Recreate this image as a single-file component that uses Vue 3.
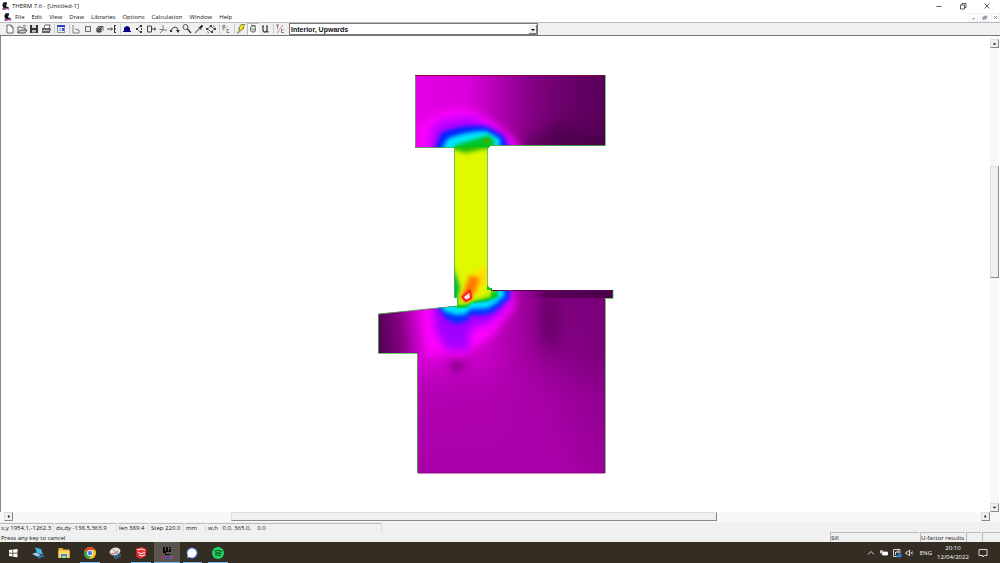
<script setup>
const menus = ['File', 'Edit', 'View', 'Draw', 'Libraries', 'Options', 'Calculation', 'Window', 'Help']

const line = (d, s = '#333', w = 1) => ({ d, s, w, f: 'none' })
const fill = (d, f = '#333') => ({ d, f, s: 'none', w: 0 })

const groups = [
  [
    { name: 'New', p: [{ d: 'M3 2h4l2 2v6H3z', f: '#fff', s: '#444', w: 0.8 }, line('M7 2v2h2', '#444', 0.6)] },
    { name: 'Open', p: [{ d: 'M2 10V4h3l1 1h3v2', f: '#fff', s: '#333', w: 0.8 }, { d: 'M2 10l2-3h7l-2 3z', f: '#ccc', s: '#333', w: 0.8 }, line('M7 3q2-2 3 1', '#333', 0.7)] },
    { name: 'Save', p: [fill('M2 2h8v8H2z', '#333'), fill('M4 2h4v3H4z', '#ddd'), fill('M4 7h4v2.4H4z', '#bbb')] },
    { name: 'Print', p: [{ d: 'M4 5l1-3h5L9 5', f: '#fff', s: '#444', w: 0.8 }, fill('M2 5h9l-1 5H2z', '#666'), fill('M3 7h6v1H3z', '#ccc')] },
  ],
  [{ name: 'Properties', p: [{ d: 'M2.5 2.5h7v7h-7z', f: '#eef', s: '#678', w: 0.8 }, fill('M2 2h8v2H2z', '#3344bb'), line('M4 5.5h2M4 7.5h2', '#777', 0.8), fill('M7 5h2v3H7z', '#3555d0')] }],
  [
    { name: 'Polygon', p: [line('M3 2v8h6V7L5 6', '#666', 0.8)] },
    { name: 'Rectangle', p: [line('M3.5 3.5h5v5h-5z', '#555', 0.9)] },
    { name: 'Fill void', p: [{ d: 'M3 5h4v4H3z', f: '#777', s: '#333', w: 1 }, line('M4 3.5h5v4M3 9l6-6', '#333', 0.8)] },
    { name: 'Insert point', p: [line('M1 6h5M5 4.5L6.5 6 5 7.5', '#333', 0.9), line('M8.5 2v8', '#333', 1), line('M8 2.5h2M8 6h2M8 9.5h2', '#333', 1)] },
  ],
  [
    { name: 'Frame', p: [fill('M3 8V5q1-2 4-2l2 2v3h1v1H2V8z', '#000080')] },
    { name: 'Edit points', p: [line('M8 2v2M8 8v2M4 6l3-3M4 6l3 3', '#555', 0.7), fill('M3 5h2v2H3zM7 2h2v2H7zM7 8h2v2H7zM8 5h1v2H8z')] },
    { name: 'Move', p: [line('M2.5 3h4v6h-4zM7 6h4M9 4.5L10.7 6 9 7.5', '#333', 0.9)] },
    { name: 'Origin', p: [line('M6 2v5M6 7h4M6 7L3 10M2.500 6.500h3', '#555', 0.8)] },
    { name: 'Rotate', p: [line('M2 8q1-4 4-4t3 4', '#333', 0.9), fill('M7 7h4L9 10z'), fill('M1 7h2v2H1z')] },
    { name: 'Zoom', p: [{ d: 'M2 4a2.2 2.2 0 1 0 5 0a2.2 2.2 0 1 0-5 0', f: '#eee', s: '#444', w: 0.9 }, line('M6.5 6l3.5 4', '#333', 1.3)] },
    { name: 'Pick material', p: [line('M2 10l5-5', '#777', 1.1), line('M5.5 4l3 3', '#333', 1), line('M7 5l2.500-2.500', '#222', 2)] },
    { name: 'Tape measure', p: [line('M2.500 6l3-3 4 3-3 3z', '#444', 0.8), fill('M5 2h2v2H5zM9 5h2v2H9zM1 5h2v2H1zM6 8h2v2H6z', '#444'), line('M8 2.500l2 1.500M2 8.500l2 1.500', '#555', 0.7)] },
  ],
  [{ name: 'Boundary conditions', p: [line('M3 2v5M3 2.5h2v2H3M9 6.5H7v3h2.500', '#777', 0.9), line('M3 8l5-5', '#aaa', 0.5)] }],
  [
    { name: 'Calculate', p: [{ d: 'M6 1.500h4L7.500 5H9l-6.500 5.500L5 6H3.500z', f: '#ffe800', s: '#444', w: 0.6 }] },
    { name: 'Show results', on: true, p: [line('M3.500 4q3-3 5 0v4q-2 3-5 0zM4 6h4M5 3h3M5 8h3M4 2l5 1', '#666', 0.9)] },
    { name: 'U-factors', p: [line('M4 3v4q0 2 2 2t2-2V3', '#444', 1.3), fill('M3 2.500h2v1H3zM7 2.500h2v1H7zM8 8h1.500v1.500H8z', '#444')] },
  ],
  [{ name: 'Temperature', p: [line('M2 2h3M3.500 2v4M9.500 6.500H7.500v3h2.500', '#666', 0.8), line('M3 10l6-8', '#d06060', 0.7)] }],
]

const readings = ['x,y 1954.1,-1262.3', 'dx,dy -138.5,363.9', 'len 389.4', 'Step 220.0', 'mm', 'w,h\u00a0\u00a0 0.0, 365.0,\u00a0\u00a0\u00a0 0.0']
</script>

<template>
  <div class="window">
    <header class="titlebar">
      <svg class="logo" viewBox="0 0 12 12"><path d="M3 1h5v3H7v3h3v2H3V7H2V3h1z" fill="#15151c" /><path d="M2 9h3v2H2zM7 8h2v2H7z" fill="#702070" /><path d="M5 9h2v2H5z" fill="#bb3344" /><path d="M9 9h2v2H9z" fill="#7744dd" /></svg>
      <span>THERM 7.6 - [Untitled-1]</span>
      <div class="winctl">
        <button aria-label="Minimize"><svg viewBox="0 0 10 10"><path d="M2.500 5.500h5" /></svg></button>
        <button aria-label="Restore"><svg viewBox="0 0 10 10"><path d="M2.500 4h4v4h-4zM4 4V2.500h4v4H6.500" /></svg></button>
        <button aria-label="Close"><svg viewBox="0 0 10 10"><path d="M2.500 2.500l5 5M7.500 2.500l-5 5" /></svg></button>
      </div>
    </header>

    <nav class="menubar">
      <svg class="logo" viewBox="0 0 12 12"><path d="M3 1h5v3H7v3h3v2H3V7H2V3h1z" fill="#15151c" /><path d="M2 9h3v2H2zM7 8h2v2H7z" fill="#702070" /><path d="M5 9h2v2H5z" fill="#bb3344" /><path d="M9 9h2v2H9z" fill="#7744dd" /></svg>
      <button v-for="m in menus" :key="m">{{ m }}</button>
      <div class="docctl">
        <button aria-label="Minimize document"><svg viewBox="0 0 8 8"><path d="M2.500 5.500h3" /></svg></button>
        <button aria-label="Restore document"><svg viewBox="0 0 8 8"><path d="M2 4h3v2H2zM3.500 4V2.500h3v2H5" /></svg></button>
        <button aria-label="Close document"><svg viewBox="0 0 8 8"><path d="M2.500 2.500l3 3M5.500 2.500l-3 3" /></svg></button>
      </div>
    </nav>

    <div class="toolbar">
      <div v-for="(g, i) in groups" :key="i" class="group">
        <button v-for="t in g" :key="t.name" :class="{ on: t.on }" :aria-label="t.name">
          <svg viewBox="0 0 12 12"><path v-for="(q, k) in t.p" :key="k" :d="q.d" :fill="q.f" :stroke="q.s" :stroke-width="q.w" /></svg>
        </button>
      </div>
      <div class="combo">
        <select aria-label="Boundary condition"><option>Interior, Upwards</option></select>
        <svg class="drop" viewBox="0 0 8 9"><path d="M0 0h8v9H0z" fill="#f0f0f0" /><path d="M0 8.500h7.500V0" fill="none" stroke="#777" /><path d="M2 4h4L4 6z" /></svg>
      </div>
    </div>

    <main class="workspace">
      <svg class="drawing" viewBox="1 36 989 476" role="img" aria-label="Thermal model">
        <defs>
          <linearGradient id="head" gradientUnits="userSpaceOnUse" x1="415" x2="605" y1="100" y2="104">
            <stop offset="0" stop-color="#e600e6" /><stop offset=".28" stop-color="#d800d8" /><stop offset=".44" stop-color="#b000b0" /><stop offset=".62" stop-color="#820082" /><stop offset=".8" stop-color="#690069" /><stop offset="1" stop-color="#580058" />
          </linearGradient>
          <linearGradient id="base" gradientUnits="userSpaceOnUse" x1="417" x2="605" y1="350" y2="330">
            <stop offset="0" stop-color="#d400d4" /><stop offset=".35" stop-color="#c800c8" /><stop offset=".6" stop-color="#9c009c" /><stop offset="1" stop-color="#7c007c" />
          </linearGradient>
          <linearGradient id="lower" x1="0" x2="0" y1="0" y2="1">
            <stop offset="0" stop-color="#aa00aa" stop-opacity="0" /><stop offset=".35" stop-color="#aa00aa" stop-opacity=".8" /><stop offset="1" stop-color="#a800a8" />
          </linearGradient>
          <linearGradient id="shade" gradientUnits="userSpaceOnUse" x1="540" x2="622" y1="400" y2="370">
            <stop offset="0" stop-color="#780078" stop-opacity="0" /><stop offset="1" stop-color="#780078" stop-opacity=".6" />
          </linearGradient>
          <linearGradient id="nose" gradientUnits="userSpaceOnUse" x1="378" x2="432" y1="340" y2="334">
            <stop offset="0" stop-color="#500050" /><stop offset=".45" stop-color="#880088" /><stop offset=".8" stop-color="#dc00dc" /><stop offset="1" stop-color="#ff00ff" stop-opacity="0" />
          </linearGradient>
          <linearGradient id="board" x1="0" x2="1" y1="0" y2="0">
            <stop offset="0" stop-color="#c000c0" stop-opacity="0" /><stop offset=".38" stop-color="#5c005c" /><stop offset="1" stop-color="#480048" />
          </linearGradient>
          <filter id="b1" x="-50%" y="-50%" width="200%" height="200%"><feGaussianBlur stdDeviation="1" /></filter>
          <filter id="b2" x="-50%" y="-50%" width="200%" height="200%"><feGaussianBlur stdDeviation="2" /></filter>
          <filter id="b3" x="-50%" y="-50%" width="200%" height="200%"><feGaussianBlur stdDeviation="4" /></filter>
          <filter id="b6" x="-80%" y="-80%" width="260%" height="260%"><feGaussianBlur stdDeviation="8" /></filter>
          <clipPath id="cHead"><path d="M415 75H605V146H489V148H415z" /></clipPath>
          <clipPath id="cBody"><path d="M454 147H487V290H613V298H605V473H417V353H378V314L457 306V298H454z" /></clipPath>
        </defs>

        <g clip-path="url(#cHead)">
          <path d="M415 75H605V148H415z" fill="url(#head)" />
          <path d="M515 156L530 140 560 122 590 134 612 140V156z" fill="#3c003c" opacity=".6" filter="url(#b6)" />
          <path d="M421 160L418 128Q436 108 466 108Q488 114 518 144V160z" fill="#ff00ff" filter="url(#b3)" />
          <path d="M428 160L432 126Q452 114 476 118L500 134 514 146V160z" fill="#b000ff" filter="url(#b3)" />
          <path d="M432 158L441 133Q466 123 488 127L504 136L510 158z" fill="#0020ff" filter="url(#b2)" />
          <path d="M438 157L447 139Q466 131 486 131L500 139V157z" fill="#00e8ff" filter="url(#b2)" />
          <path d="M444 160L456 145 476 139 489 135 495 142 490 160z" fill="#00c424" filter="url(#b2)" />
          <path d="M483 139h7l-2 5-3-1z" fill="#50a800" filter="url(#b1)" />
        </g>

        <g clip-path="url(#cBody)">
          <path d="M378 290H613V473H378z" fill="url(#base)" />
          <path d="M417 353H605V473H417z" fill="url(#lower)" />
          <path d="M540 290H613V473H540z" fill="url(#shade)" />
          <path d="M538 296h22v44l-10 14-10-14z" fill="#500050" opacity=".6" filter="url(#b6)" />
          <path d="M426 308L500 286H515L514 308 493 336 465 354 430 356 412 348V312z" fill="#ff00ff" filter="url(#b3)" />
          <path d="M415 352h50l-8 10-38 6z" fill="#e000e0" filter="url(#b6)" opacity=".6" />
          <path d="M370 300H432V356H370z" fill="url(#nose)" />
          <path d="M432 304L512 286 506 308 488 324 471 328 468 350 448 350 436 332z" fill="#a000ff" filter="url(#b3)" />
          <path d="M433 300L500 282H511L510 298 494 312 484 315 470 315 467 321 457 324 446 319z" fill="#0030ff" filter="url(#b2)" />
          <path d="M438 300H505L500 300 488 308 470 309 466 314 456 315 444 311z" fill="#00e8ff" filter="url(#b2)" />
          <path d="M487 284H504V297L494 302H484z" fill="#00e8ff" filter="url(#b2)" />
          <path d="M508 290H613V298H506z" fill="url(#board)" />
          <path d="M446 362H468L457 374z" fill="#700070" opacity=".8" filter="url(#b3)" />
          <path d="M454 296L480 284H498V297L488 301 472 303 466 308H456z" fill="#00c424" filter="url(#b1)" />
          <path d="M440 140H500V288H491V297L474 301 465 305H440z" fill="#a0e800" filter="url(#b1)" />
          <path d="M440 140H510V280L482 297 472 298 465 302H440z" fill="#e0f800" filter="url(#b2)" />
          <path d="M440 136H500V147L478 150 466 153 452 149z" fill="#20bc00" filter="url(#b2)" />
          <path d="M448 258L456 275 460 287 457 304H448z" fill="#00b440" filter="url(#b2)" />
          <path d="M471 276L491 262V278L479 292 468 301 460 298z" fill="#ffe000" filter="url(#b2)" />
          <path d="M470 275L480 279 476 289 471 298 461 298z" fill="#ff7a00" filter="url(#b2)" />
          <path d="M461 297L470 289 472 299 465 302z" fill="#ff2018" filter="url(#b1)" />
          <path d="M462.500 297L470 291 471 298 466 301z" fill="#ffe8e8" stroke="#ff2020" stroke-width="2" />
        </g>

        <path d="M415.500 75V147.500H454.500V298M487.500 148V290M605.500 75V145.500H490M457.500 298V306L378.500 314V353.500H417.500V473M605.500 473V298.500H613V290" fill="none" stroke="#48b848" stroke-width="1" stroke-opacity=".8" />
        <path d="M415 75.500H605" stroke="#800040" /><path d="M491 290.500H613" stroke="#580058" /><path d="M418 473H605" stroke="#8a1080" />
        <path d="M487 145h3v2h-2v2h-1zM487 286h1l2 2h2v2h-5z" fill="#10c420" />
      </svg>

      <div class="vscroll">
        <button aria-label="Scroll up"><svg viewBox="0 0 8 8"><path d="M2 5h4L4 3z" /></svg></button>
        <div class="gap-a"></div>
        <div class="thumb"></div>
        <div class="gap-b"></div>
        <button aria-label="Scroll down"><svg viewBox="0 0 8 8"><path d="M2 3h4L4 5z" /></svg></button>
      </div>
    </main>

    <div class="hscroll">
      <button aria-label="Scroll left"><svg viewBox="0 0 8 8"><path d="M5 2v4L3 4z" /></svg></button>
      <div class="gap-a"></div>
      <div class="thumb"></div>
      <div class="gap-b"></div>
      <button aria-label="Scroll right"><svg viewBox="0 0 8 8"><path d="M3 2v4L5 4z" /></svg></button>
    </div>

    <div class="readings"><span v-for="r in readings" :key="r">{{ r }}</span></div>

    <footer class="status">
      <span class="hint">Press any key to cancel</span>
      <span class="cell">Sill</span><span class="cell">U-factor results</span><span class="cell"></span><span class="cell"></span>
    </footer>

    <div class="taskbar">
      <div class="apps">
        <button aria-label="Start"><svg viewBox="0 0 14 14"><path d="M3 4l3.500-.5V6.700H3zM7.200 3.400L11.500 3v3.700H7.200zM3 7.400h3.500v3.200L3 10zM7.200 7.400h4.300V11.300l-4.300-.6z" fill="#fff" /></svg></button>
        <button aria-label="Remote desktop"><svg viewBox="0 0 14 14"><path d="M4 1.500l6 1.500 2 5.500-6-1.500z" fill="#42b4f4" /><path d="M1 8l4-1.500 5 2.500-4 1.500z" fill="#aacbe0" /><path d="M6 10.500l7-1.500v1.500l-6 2z" fill="#2680c4" /></svg></button>
        <button aria-label="File Explorer"><svg viewBox="0 0 14 14"><path d="M1.500 2h4l1 1.500h6V12h-11z" fill="#e9a92c" /><path d="M1.500 4.500h11V12h-11z" fill="#ffd768" /><path d="M4 8h6v4H8.500V10h-3v2H4z" fill="#3d91d5" /></svg></button>
        <button class="open" aria-label="Chrome"><svg viewBox="0 0 14 14"><circle cx="7" cy="7" r="6" fill="#f8c51c" /><path d="M1.800 4A6 6 0 0 1 12.200 4H7A3 3 0 0 0 4.400 8.500z" fill="#e54335" /><path d="M1.800 4L5 9.300 7.700 10 6 13A6 6 0 0 1 1.800 4z" fill="#2fa350" /><circle cx="7" cy="7" r="3" fill="#fff" /><circle cx="7" cy="7" r="2.300" fill="#4285f4" /></svg></button>
        <button aria-label="Snipping Tool"><svg viewBox="0 0 14 14"><ellipse cx="7" cy="5.500" rx="5.500" ry="3.800" fill="#e6e3e5" transform="rotate(-15 7 5.500)" /><path d="M2 8q4 1 8-3" stroke="#d34652" fill="none" /><path d="M5 3l5 6M9.500 6L8 10" stroke="#999" fill="none" /><circle cx="8" cy="11" r="1.500" fill="none" stroke="#3586bd" /><circle cx="11" cy="9.500" r="1.500" fill="none" stroke="#3586bd" /></svg></button>
        <button class="open" aria-label="SketchUp"><svg viewBox="0 0 14 14"><path d="M2 2.500L8 1l4.500 2-.5 7-5.500 3L2.500 11z" fill="#e52b2b" /><path d="M3 4l5-1 3 1.500M4 6.500l3 1 4-1M5 9l3 1 3-1.500" stroke="#fff" fill="none" /></svg></button>
        <button class="open active" aria-label="THERM"><svg viewBox="0 0 14 14"><path d="M3 1h2v4h1V1h2v4h1v1H6v2h4v1H5V7H3zM9 1h2v1H9zM9 3h2v3H9z" fill="#08080b" /><path d="M1 10h3v1H3v2H2v-2H1z" fill="#c62b50" /><path d="M5 10h1v3H5z" fill="#a439c1" /><path d="M7 10h2v3H7z" fill="#3157d0" /><path d="M10 10h3v3h-1v-2h-1v2h-1z" fill="#b53bb3" /></svg></button>
        <button class="open" aria-label="Signal"><svg viewBox="0 0 14 14"><circle cx="7" cy="7" r="5.500" fill="#5585ec" /><path d="M7 2.500A4.500 4.500 0 1 1 4.500 10.800L2 12 3.200 9.300A4.500 4.500 0 0 1 7 2.500" fill="#fff" /></svg></button>
        <button class="open" aria-label="Spotify"><svg viewBox="0 0 14 14"><circle cx="7" cy="7" r="6" fill="#1ed760" /><path d="M3.500 5q4-1.300 7.500.6M4 7.300q3.500-1 6.300.5M4.400 9.300q3-.7 5.300.4" stroke="#173b23" stroke-width="1.100" fill="none" /></svg></button>
      </div>
      <div class="tray">
        <svg viewBox="0 0 10 10"><path d="M2 6.500L5 3.500l3 3" /></svg>
        <svg viewBox="0 0 10 10"><path d="M3.500 4h5v3h-5z" fill="#fff" /><path d="M1 3h3M1.500 3v2h1.500V2" /></svg>
        <svg viewBox="0 0 10 10"><path d="M8 5V1.500H1.500v7H5M3.500 4h3M3.500 4v3M6 2v3" /><circle cx="7.500" cy="7.500" r="2.300" fill="#2879d8" stroke="none" /></svg>
        <svg viewBox="0 0 10 10"><path d="M1 4h1.500l2-2v6l-2-2H1zM6 4q1 1 0 2" /><path d="M7 2.500q2 2.500 0 5" opacity=".5" /></svg>
        <span class="lang">ENG</span>
        <time>20:10<br />12/04/2022</time>
        <svg class="note" viewBox="0 0 10 10"><path d="M1 1.500h8v6H6.500L5 9V7.500H1z" /></svg>
      </div>
    </div>
  </div>
</template>

<style>
body { margin: 0; }
</style>

<style scoped>
.window { display: flex; flex-direction: column; min-height: 100vh; background: #f0f0f0; color: #111; font: 6px/10px "Open Sans", "Noto Sans", sans-serif; }
button { border: 0; padding: 0; margin: 0; background: none; font: inherit; color: inherit; display: block; }
svg { display: block; }
.titlebar, .menubar { display: flex; align-items: center; background: #fff; }
.titlebar { padding-left: 1px; gap: 2px; height: 12px; }
.menubar { padding-left: 3px; gap: 7px; height: 10px; }
.menubar .logo { margin-right: -4px; }
.logo { width: 9px; height: 10px; flex: none; }
.winctl, .docctl { display: flex; margin-left: auto; }
.winctl { gap: 14px; padding-right: 8px; }
.winctl svg { width: 10px; height: 10px; fill: none; stroke: #333; stroke-width: .8; }
.docctl { gap: 2px; }
.docctl button { border: 1px solid #eee; }
.docctl svg { width: 7px; height: 7px; fill: none; stroke: #68758d; }
.toolbar { display: flex; align-items: center; gap: 3px; height: 12px; padding-left: 4px; border-top: 1px solid #bbb; border-bottom: 1px solid #777; }
.group { display: flex; }
.group + .group { box-shadow: -2px 0 0 -1px #ccc; }
.group svg { width: 12px; height: 12px; }
.group .on { background: #fafafa; box-shadow: inset 1px 1px 0 #bbb; }
.combo { display: grid; width: 25%; height: 12px; box-sizing: border-box; border: 1px solid #777; background: #fff; align-items: center; }
.combo > * { grid-area: 1 / 1; }
.combo select { appearance: none; width: 100%; height: 10px; border: 0; padding: 1px 1px 0; background: none; color: #111; font: bold 7px/9px "Liberation Sans", sans-serif; }
.drop { width: 8px; height: 9px; justify-self: end; pointer-events: none; }
.workspace { flex: 1; display: flex; min-height: 0; background: #fff; border-left: 1px solid #888; }
.drawing { flex: 1; min-width: 0; width: 0; height: auto; }
.vscroll, .hscroll { display: flex; background: #f8f8f8; }
.vscroll { flex-direction: column; width: 9px; padding-top: 3px; margin-right: 1px; }
.hscroll { height: 10px; padding: 0 10px 0 4px; }
.vscroll button, .hscroll button, .thumb { box-sizing: border-box; background: #f0f0f0; border: 1px solid; border-color: #ddd #888 #888 #ddd; }
.vscroll button, .hscroll button { width: 9px; height: 9px; flex: none; }
.vscroll button svg, .hscroll button svg { width: 7px; height: 7px; }
.vscroll .gap-a { flex: 119; } .vscroll .thumb { flex: 110; } .vscroll .gap-b { flex: 227; }
.hscroll .gap-a { flex: 218; } .hscroll .thumb { flex: 485; height: 9px; } .hscroll .gap-b { flex: 265; }
.readings { display: grid; grid-template-columns: 54px 62px 31px 34px 21px 175px; gap: 1px; height: 10px; padding-top: 1px; box-sizing: border-box; }
.readings span { border-top: 1px solid #bbb; border-right: 1px solid #ddd; padding-left: 1px; line-height: 8px; white-space: nowrap; }
.status { display: grid; grid-template-columns: 1fr 89px 45px 15px 18px; gap: 1px; height: 10px; white-space: nowrap; }
.hint { padding: 1px 0 0 1px; line-height: 10px; }
.cell { border-top: 1px solid #bbb; border-left: 1px solid #bbb; line-height: 10px; }
.taskbar { display: flex; justify-content: space-between; height: 21px; background: #332d24; color: #fff; }
.apps { display: grid; grid-template-columns: repeat(9, 1fr); width: 231px; }
.apps button { display: grid; place-items: center; position: relative; height: 21px; }
.apps svg { width: 14px; height: 14px; }
.apps .active { background: #59554e; }
.open::after { content: ""; position: absolute; left: 3px; right: 3px; bottom: 0; height: 1px; background: #78b8ea; }
.active::after { left: 0; right: 0; }
.tray { display: flex; align-items: center; gap: 3px; padding-right: 12px; }
.tray svg { width: 10px; height: 10px; fill: none; stroke: #fff; stroke-width: .8; }
.tray time { width: 36px; text-align: center; line-height: 9px; }
.lang { margin-left: 2px; }
.tray .note { margin-left: 4px; }
</style>
